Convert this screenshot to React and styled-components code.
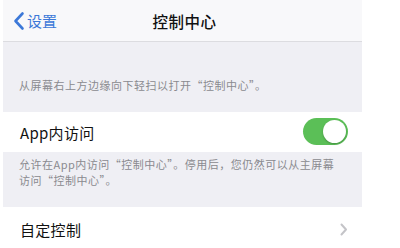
import React from "react";
import styled, { createGlobalStyle } from "styled-components";

const Global = createGlobalStyle`
  html, body { margin: 0; padding: 0; background: #ffffff; }
  body { font-family: "Noto Sans CJK SC", "Liberation Sans", sans-serif; -webkit-font-smoothing: antialiased; }
`;

const Screen = styled.div`
  width: 359px;
  margin-left: 3px;
  height: 248px;
  overflow: hidden;
  display: flex;
  flex-direction: column;
  background: #efeff4;
`;

const NavBar = styled.div`
  height: 41px;
  flex: none;
  background: #f8f8fa;
  border-bottom: 1px solid #dcdce0;
  display: grid;
  grid-template-columns: 1fr auto 1fr;
  align-items: center;
`;

const Back = styled.div`
  display: flex;
  align-items: center;
  gap: 2px;
  padding-left: 9px;
  color: #3c78d8;
  font-size: 15px;
`;

const Title = styled.div`
  font-size: 15.5px;
  font-weight: 500;
  color: #111;
  letter-spacing: 0.5px;
  margin-left: 4px;
`;

const Footer = styled.div`
  padding: ${(p) => p.$pad};
  font-size: 11px;
  line-height: 16px;
  color: #8a8a8f;
  letter-spacing: 0.5px;
`;

const Row = styled.div`
  height: ${(p) => p.$h}px;
  flex: none;
  background: #ffffff;
  display: flex;
  align-items: center;
  justify-content: space-between;
  padding: 0 14px 0 17px;
`;

const Label = styled.div`
  font-size: 15px;
  color: #111;
  letter-spacing: 0.3px;
`;

const Toggle = styled.div`
  width: 45px;
  height: 27px;
  border-radius: 14px;
  background: #5bbf57;
  position: relative;
  margin-top: -2px;
  &::after {
    content: "";
    position: absolute;
    right: 2px;
    top: 2px;
    width: 23px;
    height: 23px;
    border-radius: 50%;
    background: #fff;
    box-shadow: 0 1px 2px rgba(0,0,0,0.25);
  }
`;

export default function App() {
  return (
    <>
      <Global />
      <Screen>
        <NavBar>
          <Back>
            <svg width="13" height="20" viewBox="0 0 13 20">
              <path d="M10.5 2.5 L3.5 10 L10.5 17.5" fill="none" stroke="#3c78d8" strokeWidth="2.6" strokeLinecap="round" strokeLinejoin="round" />
            </svg>
            <span>设置</span>
          </Back>
          <Title>控制中心</Title>
          <div />
        </NavBar>
        <Footer $pad="35px 16px 19px 16px">从屏幕右上方边缘向下轻扫以打开“控制中心”。</Footer>
        <Row $h={40}>
          <Label>App内访问</Label>
          <Toggle />
        </Row>
        <Footer $pad="4px 16px 19px 16px">
          允许在App内访问“控制中心”。停用后，您仍然可以从主屏幕
          <br />
          访问“控制中心”。
        </Footer>
        <Row $h={44}>
          <Label>自定控制</Label>
          <svg width="8" height="13" viewBox="0 0 8 13">
            <path d="M1.5 1.5 L6 6.5 L1.5 11.5" fill="none" stroke="#c4c4c8" strokeWidth="2" strokeLinecap="round" strokeLinejoin="round" />
          </svg>
        </Row>
      </Screen>
    </>
  );
}
